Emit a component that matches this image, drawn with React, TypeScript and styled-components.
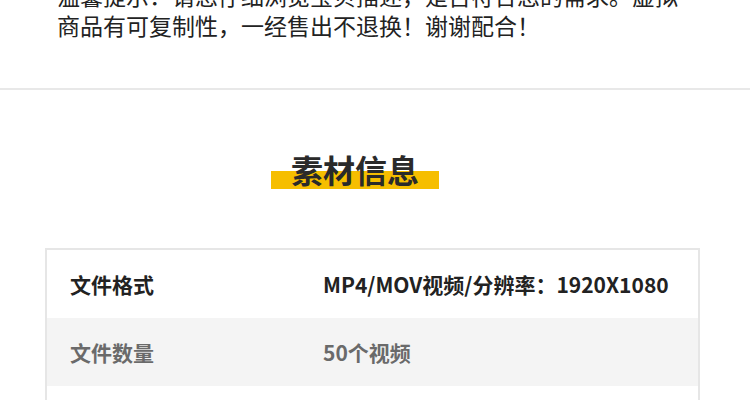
import React from 'react';
import styled, { createGlobalStyle } from 'styled-components';

const GlobalStyle = createGlobalStyle`
    html, body {
        margin: 0;
        padding: 0;
        background: #ffffff;
    }
    body {
        font-family: 'Noto Sans CJK SC', 'Noto Sans', sans-serif;
        overflow: hidden;
    }
`;

const rows = [
    { label: '文件格式', value: 'MP4/MOV视频/分辨率：1920X1080', strong: true },
    { label: '文件数量', value: '50个视频', strong: false },
    { label: '', value: '', strong: true },
];

const App = () => {
    return (
        <>
            <GlobalStyle />
            <Page>
                <Notice>
                    温馨提示：请您仔细浏览宝贝描述，是否符合您的需求。虚拟商品有可复制性，一经售出不退换！谢谢配合！
                </Notice>
                <Divider />
                <TitleWrapper>
                    <Title>素材信息</Title>
                </TitleWrapper>
                <Table>
                    {rows.map((row, i) => (
                        <Row key={i} $shaded={i % 2 === 1} $strong={row.strong}>
                            <Label>{row.label}</Label>
                            <Value>{row.value}</Value>
                        </Row>
                    ))}
                </Table>
            </Page>
        </>
    );
};

export default App;

const Page = styled.div`
    width: 750px;
    height: 400px;
    overflow: hidden;
    display: flex;
    flex-direction: column;
`;

const Notice = styled.p`
    margin: -20px 0 0;
    padding: 0 50px 0 57px;
    font-size: 23px;
    line-height: 30px;
    color: #222222;
`;

const Divider = styled.div`
    margin-top: 48px;
    height: 2px;
    background: #e8e8e8;
    flex-shrink: 0;
`;

const TitleWrapper = styled.div`
    display: flex;
    justify-content: center;
    margin-top: 59px;
    padding-right: 40px;
`;

const Title = styled.h2`
    margin: 0;
    padding: 0 20px;
    height: 40px;
    font-size: 32px;
    line-height: 40px;
    font-weight: 700;
    color: #2a2a2a;
    background: linear-gradient(
        to bottom,
        transparent 0,
        transparent 22px,
        #f6be00 22px,
        #f6be00 40px
    );
`;

const Table = styled.div`
    margin: 59px 0 0 45px;
    width: 651px;
    border: 2px solid #e6e6e6;
    border-bottom: none;
    display: flex;
    flex-direction: column;
`;

const Row = styled.div<{ $shaded: boolean; $strong: boolean }>`
    display: grid;
    grid-template-columns: 253px 1fr;
    align-items: center;
    height: 68px;
    padding-left: 23px;
    flex-shrink: 0;
    background: ${(p) => (p.$shaded ? '#f4f4f4' : '#ffffff')};
    color: ${(p) => (p.$strong ? '#222222' : '#6a6a6a')};
    font-size: 21px;
    font-weight: 700;
`;

const Label = styled.span`
    white-space: nowrap;
`;

const Value = styled.span`
    white-space: nowrap;
`;
